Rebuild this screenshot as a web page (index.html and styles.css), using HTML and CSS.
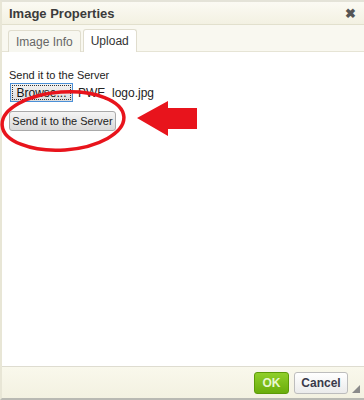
FILE: index.html
```html
<!DOCTYPE html>
<html>
<head>
	<title>Image Properties</title>
	<meta charset="utf-8">
	<link rel="stylesheet" href="styles.css">
</head>
<body>
	<div class="dialog">
		<div class="titlebar">
			<span class="title">Image Properties</span>
			<span class="close">&#10006;</span>
		</div>
		<div class="tabs">
			<div class="tab">Image Info</div>
			<div class="tab selected">Upload</div>
		</div>
		<div class="content">
			<div class="label">Send it to the Server</div>
			<div class="filerow">
				<button class="browse">Browse...</button>
				<span class="filename">PWE_logo.jpg</span>
			</div>
			<button class="send">Send it to the Server</button>

			<!-- annotation drawn over the dialog -->
			<svg class="mark" width="364" height="120" viewBox="0 0 364 120">
				<ellipse cx="63" cy="69" rx="61" ry="29" fill="none" stroke="#e8141c" stroke-width="3.5" transform="rotate(-4 63 69)"/>
				<polygon points="137,66 168,49 168,56 197,56 197,77 168,77 168,84" fill="#e8141c"/>
			</svg>
		</div>
		<div class="footer">
			<button class="ok">OK</button>
			<button class="cancel">Cancel</button>
			<span class="grip"></span>
		</div>
	</div>
</body>
</html>
```

FILE: styles.css
```css
*{
	padding: 0;
	margin: 0;
	box-sizing: border-box;
}
body{
	font-family: "Liberation Sans", Arial, sans-serif;
	width: 364px;
	height: 400px;
	overflow: hidden;
	background: #fff;
}
.dialog{
	width: 364px;
	height: 400px;
	display: flex;
	flex-direction: column;
	border-top: 2px solid #e4e3d8;
	border-bottom: 2px solid #b9b9b3;
	border-left: 2px solid #e8e6d6;
	background: #f8f7ec;
}
.titlebar{
	height: 23px;
	display: flex;
	align-items: center;
	justify-content: space-between;
	padding: 0 8px 0 7px;
	background: linear-gradient(#fbfaf3, #f3f1e2);
	border-bottom: 1px solid #e2e0cd;
}
.title{
	font-size: 13px;
	font-weight: bold;
	color: #3b3b3b;
}
.close{
	font-size: 13px;
	font-weight: bold;
	color: #555;
}
.tabs{
	height: 27px;
	display: flex;
	align-items: flex-end;
	gap: 2px;
	padding-left: 6px;
	background: #f9f8f0;
	border-bottom: 1px solid #e6e4d5;
}
.tab{
	height: 22px;
	margin-bottom: -1px;
	padding: 0 7px;
	display: flex;
	align-items: center;
	font-size: 12px;
	color: #666;
	background: #f7f7f0;
	border: 1px solid #e0ddce;
	border-bottom: none;
	border-radius: 3px 3px 0 0;
}
.tab.selected{
	background: #fff;
	color: #333;
	height: 23px;
	padding: 0 7px;
}
.content{
	flex: 1;
	position: relative;
	background: #fff;
	padding: 17px 7px 0;
	border-bottom: 1px solid #dedcd0;
}
.label{
	font-size: 11px;
	color: #222;
}
.filerow{
	display: flex;
	align-items: center;
	gap: 5px;
	margin-top: 2px;
}
.browse{
	width: 63px;
	height: 19px;
	margin-left: 1px;
	font-family: inherit;
	font-size: 12px;
	color: #111;
	background: linear-gradient(#f2f2f2, #dcdcdc);
	border: 1px solid #4b90d8;
	outline: 1px dotted #333;
	outline-offset: -3px;
}
.filename{
	font-size: 12px;
	color: #222;
}
.send{
	margin-top: 9px;
	width: 107px;
	height: 20px;
	padding: 0;
	font-family: inherit;
	font-size: 11px;
	color: #222;
	background: linear-gradient(#f4f4f4, #d9d9d9);
	border: 1px solid #a9a9a9;
	border-radius: 3px;
}
.mark{
	position: absolute;
	left: -2px;
	top: 0;
}
.footer{
	height: 31px;
	display: flex;
	align-items: center;
	justify-content: flex-end;
	gap: 5px;
	padding-right: 16px;
	background: linear-gradient(#f9f8ec, #f3f1e1);
	position: relative;
}
.ok{
	width: 35px;
	height: 22px;
	padding: 0;
	font-family: inherit;
	font-size: 12px;
	font-weight: bold;
	color: #eaf7d0;
	background: linear-gradient(#8fcf2a, #6aad0c);
	border: 1px solid #5c9a08;
	border-radius: 3px;
}
.cancel{
	width: 54px;
	height: 22px;
	padding: 0;
	font-family: inherit;
	font-size: 12px;
	font-weight: bold;
	color: #3a3a4a;
	background: linear-gradient(#fff, #ebebeb);
	border: 1px solid #bdbdbd;
	border-radius: 3px;
}
.grip{
	position: absolute;
	right: 4px;
	bottom: 5px;
	width: 0;
	height: 0;
	border-left: 8px solid transparent;
	border-bottom: 8px solid #8a8a8a;
}
```
